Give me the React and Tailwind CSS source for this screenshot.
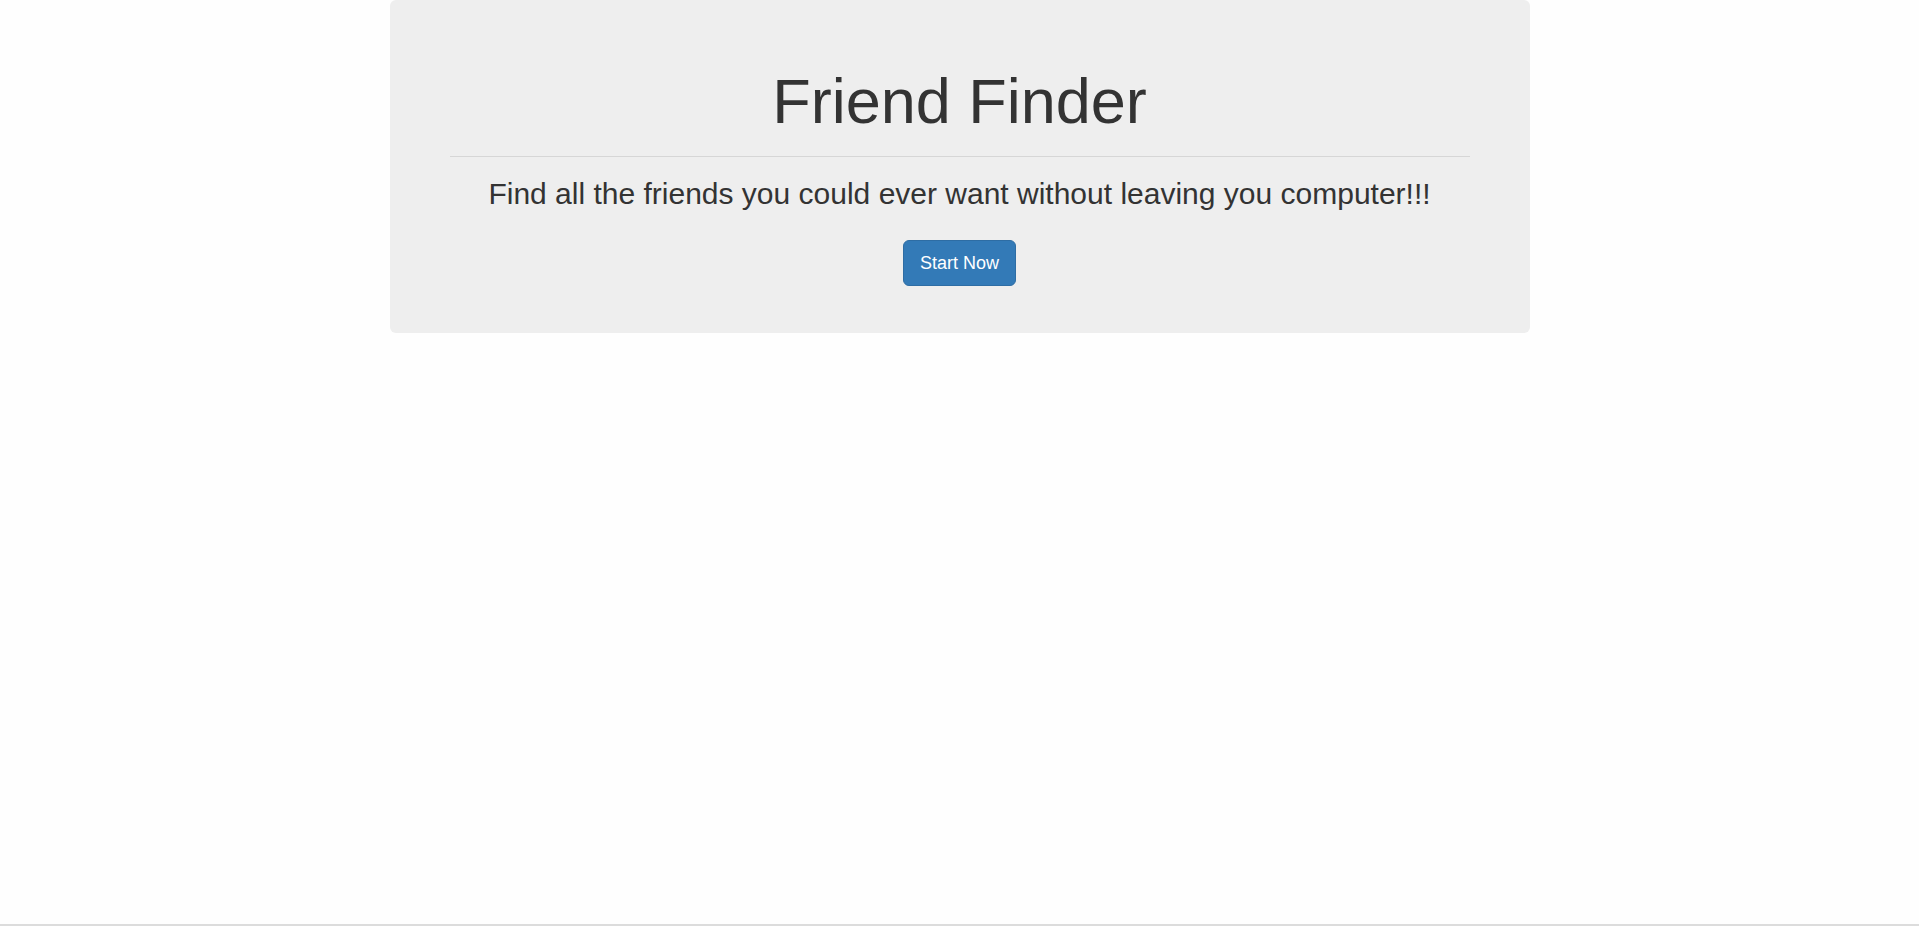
export default function App() {
  return (
    <div
      className="h-[926px] w-full bg-[#fefefe] border-b-[2px] border-[#dcdcdc] box-border"
      style={{ fontFamily: '"Liberation Sans", Arial, Helvetica, sans-serif' }}
    >
      <div className="mx-auto w-[1140px] rounded-[6px] bg-[#eeeeee] px-[60px] pt-[48px] pb-[47px] text-center text-[#333333]">
        <h1 className="mt-[19px] text-[63px] leading-[69px] font-normal">Friend Finder</h1>
        <hr className="mt-[20px] border-0 border-t border-[#d6d6d6]" />
        <h2 className="mt-[20px] text-[30px] leading-[33px] font-normal">
          Find all the friends you could ever want without leaving you computer!!!
        </h2>
        <div className="mt-[30px] flex justify-center">
          <button className="rounded-[6px] border border-[#2e6da4] bg-[#337ab7] px-[16px] py-[10px] text-[18px] leading-[24px] text-white">
            Start Now
          </button>
        </div>
      </div>
    </div>
  );
}
